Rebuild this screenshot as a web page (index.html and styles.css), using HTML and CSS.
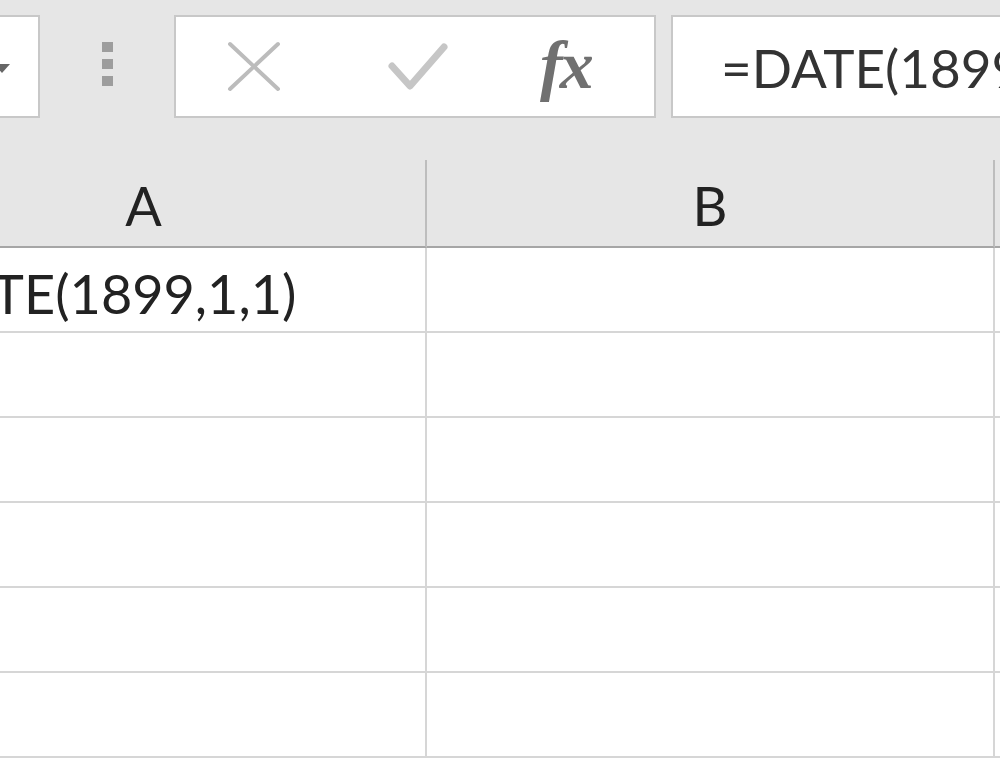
FILE: index.html
```html
<!DOCTYPE html>
<html lang="en">
<head>
  <meta charset="UTF-8">
  <title>Formula Bar</title>
  <link rel="stylesheet" href="styles.css">
</head>
<body>
  <div class="toolbar">
    <div class="namebox"><span class="caret"></span></div>
    <div class="grip"><i></i><i></i><i></i></div>
    <div class="fx-buttons">
      <svg class="btn-cancel" width="56" height="52" viewBox="0 0 56 52">
        <path d="M3 3 L51 48 M51 3 L3 48" stroke="#bcbcbc" stroke-width="4" fill="none" stroke-linecap="round"/>
      </svg>
      <svg class="btn-enter" width="60" height="52" viewBox="0 0 60 52">
        <path d="M4 24 L22 44 L56 5" stroke="#c6c6c6" stroke-width="7" fill="none" stroke-linecap="round" stroke-linejoin="round"/>
      </svg>
      <span class="btn-fx">fx</span>
    </div>
    <div class="formula">=DATE(1899,1,1)</div>
  </div>
  <div class="sheet">
    <div class="col-head">A</div>
    <div class="col-head">B</div>
    <div class="col-head last"></div>

    <div class="cell">=DATE(1899,1,1)</div><div class="cell"></div><div class="cell last"></div>
    <div class="cell"></div><div class="cell"></div><div class="cell last"></div>
    <div class="cell"></div><div class="cell"></div><div class="cell last"></div>
    <div class="cell"></div><div class="cell"></div><div class="cell last"></div>
    <div class="cell"></div><div class="cell"></div><div class="cell last"></div>
    <div class="cell"></div><div class="cell"></div><div class="cell last"></div>
  </div>
</body>
</html>
```

FILE: styles.css
```css
body {
  margin: 0;
  width: 1000px;
  height: 766px;
  overflow: hidden;
  background: #ffffff;
  font-family: 'Lato', 'Open Sans', sans-serif;
}
.toolbar {
  display: flex;
  align-items: flex-start;
  height: 160px;
  padding-top: 15px;
  box-sizing: border-box;
  background: #e6e6e6;
}
.namebox {
  flex: 0 0 40px;
  height: 103px;
  box-sizing: border-box;
  background: #fff;
  border: 2px solid #c8c8c8;
  border-left: none;
  display: flex;
  align-items: center;
}
.caret {
  width: 0;
  height: 0;
  margin-left: -6px;
  margin-top: 4px;
  border-left: 8px solid transparent;
  border-right: 8px solid transparent;
  border-top: 9px solid #666;
}
.grip {
  display: flex;
  flex-direction: column;
  gap: 7px;
  margin: 27px 0 0 62px;
}
.grip i {
  display: block;
  width: 11px;
  height: 10px;
  background: #9d9d9d;
}
.fx-buttons {
  flex: 0 0 482px;
  height: 103px;
  margin-left: 61px;
  box-sizing: border-box;
  background: #fff;
  border: 2px solid #c8c8c8;
  display: flex;
  align-items: center;
}
.btn-cancel {
  margin-left: 51px;
}
.btn-enter {
  margin-left: 105px;
  margin-top: 2px;
}
.btn-fx {
  margin-left: 92px;
  margin-top: -2px;
  font-family: 'Liberation Serif', serif;
  font-style: italic;
  font-weight: bold;
  font-size: 68px;
  color: #707070;
  letter-spacing: -3px;
}
.formula {
  flex: 1;
  height: 103px;
  margin-left: 15px;
  box-sizing: border-box;
  background: #fff;
  border: 2px solid #c8c8c8;
  border-right: none;
  padding-left: 48px;
  font-size: 53px;
  line-height: 102px;
  color: #333;
  white-space: nowrap;
  overflow: hidden;
}
.sheet {
  display: grid;
  grid-template-columns: 565px 568px 200px;
  grid-template-rows: 88px;
  grid-auto-rows: 85px;
  margin-left: -138px;
}
.col-head {
  box-sizing: border-box;
  background: #e6e6e6;
  border-bottom: 2px solid #a6a6a6;
  border-right: 2px solid #bdbdbd;
  display: flex;
  align-items: center;
  justify-content: center;
  padding-top: 4px;
  font-size: 54px;
  color: #222;
}
.col-head.last,
.cell.last {
  border-right: none;
}
.cell {
  box-sizing: border-box;
  border-bottom: 2px solid #d6d6d6;
  border-right: 2px solid #d6d6d6;
  display: flex;
  align-items: flex-end;
  padding: 0 0 10px 26px;
  font-size: 54px;
  line-height: 1;
  color: #222;
  white-space: nowrap;
}
```
